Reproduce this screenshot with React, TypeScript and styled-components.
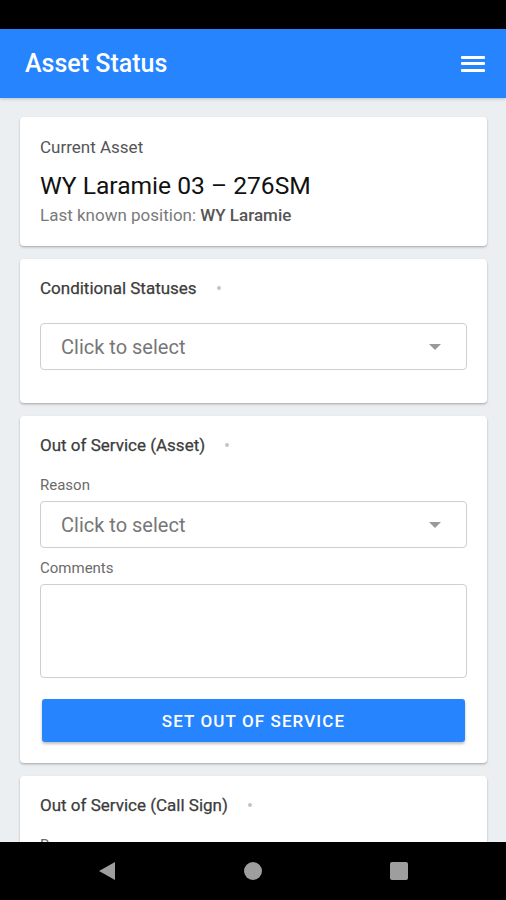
import { FC } from 'react';
import styled, { createGlobalStyle } from 'styled-components';

const GlobalStyle = createGlobalStyle`
  html, body {
    margin: 0;
    padding: 0;
    height: 100%;
  }
  body {
    font-family: Roboto, 'Liberation Sans', sans-serif;
    background: #eceff1;
  }
`;

const Screen = styled.div`
  height: 900px;
  display: flex;
  flex-direction: column;
  overflow: hidden;
  background: #eceff1;
`;

const StatusBar = styled.div`
  height: 29px;
  flex: none;
  background: #000;
`;

const AppBar = styled.header`
  height: 69px;
  flex: none;
  background: #2684ff;
  display: flex;
  align-items: center;
  justify-content: space-between;
  padding: 0 21px 0 25px;
  box-shadow: 0 1px 3px rgba(0, 0, 0, 0.2);
`;

const AppTitle = styled.h1`
  margin: 0;
  color: #fff;
  font-size: 25px;
  font-weight: 500;
`;

const MenuButton = styled.div`
  width: 24px;
  display: flex;
  flex-direction: column;
  gap: 3.5px;

  span {
    height: 3px;
    background: #fff;
    border-radius: 1px;
  }
`;

const Content = styled.main`
  flex: 1;
  overflow: hidden;
  padding: 19px 19px 0 20px;
  display: flex;
  flex-direction: column;
  gap: 13px;
`;

const Card = styled.section<{ $pb?: number }>`
  flex: none;
  background: #fff;
  border-radius: 4px;
  box-shadow: 0 1px 2px rgba(0, 0, 0, 0.22), 0 2px 3px rgba(0, 0, 0, 0.08);
  padding: 20px 20px ${(p) => p.$pb ?? 20}px 20px;
  display: flex;
  flex-direction: column;
`;

const Overline = styled.div`
  font-size: 17px;
  line-height: 20px;
  color: #555;
`;

const AssetName = styled.div`
  margin-top: 15px;
  font-size: 24.6px;
  line-height: 28px;
  color: #111;
`;

const Position = styled.div`
  margin-top: 5px;
  font-size: 17px;
  line-height: 20px;
  color: #7a7a7a;

  b {
    color: #555;
    font-weight: 500;
  }
`;

const SectionHead = styled.div<{ $mb: number }>`
  display: flex;
  align-items: center;
  gap: 20px;
  font-size: 17px;
  line-height: 18px;
  font-weight: 400;
  color: #3c3c3c;
  -webkit-text-stroke: 0.25px #3c3c3c;
  margin-bottom: ${(p) => p.$mb}px;
`;

const Dot = styled.span`
  width: 4px;
  height: 4px;
  border-radius: 50%;
  background: #c4c4c4;
`;

const FieldLabel = styled.div<{ $mb: number }>`
  font-size: 15px;
  line-height: 18px;
  color: #6b6b6b;
  margin-bottom: ${(p) => p.$mb}px;
`;

const Select = styled.div<{ $mb: number }>`
  height: 47px;
  box-sizing: border-box;
  border: 1px solid #cfcfcf;
  border-radius: 4px;
  display: flex;
  align-items: center;
  justify-content: space-between;
  padding: 0 25px 0 20px;
  font-size: 20px;
  color: #777;
  margin-bottom: ${(p) => p.$mb}px;
`;

const Caret = styled.span`
  width: 0;
  height: 0;
  border-left: 6px solid transparent;
  border-right: 6px solid transparent;
  border-top: 6px solid #9a9a9a;
`;

const TextArea = styled.div`
  height: 94px;
  box-sizing: border-box;
  border: 1px solid #cfcfcf;
  border-radius: 4px;
  margin-bottom: 21px;
`;

const PrimaryButton = styled.button`
  margin: 0 2px;
  height: 43px;
  border: none;
  border-radius: 3px;
  background: #2684ff;
  color: #fff;
  font-family: Roboto, 'Liberation Sans', sans-serif;
  font-size: 17px;
  font-weight: 500;
  letter-spacing: 1.1px;
  box-shadow: 0 2px 3px rgba(0, 0, 0, 0.25);
`;

const NavBar = styled.nav`
  position: fixed;
  left: 0;
  right: 0;
  bottom: 0;
  height: 58px;
  background: #000;
  display: flex;
  align-items: center;
  justify-content: center;
  gap: 126px;
`;

const Back = () => (
  <svg width="20" height="22" viewBox="0 0 20 22">
    <path d="M18 2 L18 20 L2 11 Z" fill="#9e9e9e" />
  </svg>
);

const Home = () => (
  <svg width="20" height="20" viewBox="0 0 20 20">
    <circle cx="10" cy="10" r="9" fill="#9e9e9e" />
  </svg>
);

const Recents = () => (
  <svg width="20" height="20" viewBox="0 0 20 20">
    <rect x="1" y="1" width="18" height="18" rx="2" fill="#9e9e9e" />
  </svg>
);

const SelectField: FC<{ mb: number }> = ({ mb }) => (
  <Select $mb={mb}>
    Click to select
    <Caret />
  </Select>
);

export default function App() {
  return (
    <>
      <GlobalStyle />
      <Screen>
        <StatusBar />
        <AppBar>
          <AppTitle>Asset Status</AppTitle>
          <MenuButton>
            <span />
            <span />
            <span />
          </MenuButton>
        </AppBar>
        <Content>
          <Card $pb={21}>
            <Overline>Current Asset</Overline>
            <AssetName>WY Laramie 03 – 276SM</AssetName>
            <Position>
              Last known position: <b>WY Laramie</b>
            </Position>
          </Card>
          <Card>
            <SectionHead $mb={26}>
              Conditional Statuses <Dot />
            </SectionHead>
            <SelectField mb={13} />
          </Card>
          <Card $pb={21}>
            <SectionHead $mb={22}>
              Out of Service (Asset) <Dot />
            </SectionHead>
            <FieldLabel $mb={7}>Reason</FieldLabel>
            <SelectField mb={11} />
            <FieldLabel $mb={7}>Comments</FieldLabel>
            <TextArea />
            <PrimaryButton>SET OUT OF SERVICE</PrimaryButton>
          </Card>
          <Card>
            <SectionHead $mb={22}>
              Out of Service (Call Sign) <Dot />
            </SectionHead>
            <FieldLabel $mb={7}>Reason</FieldLabel>
            <SelectField mb={11} />
          </Card>
        </Content>
        <NavBar>
          <Back />
          <Home />
          <Recents />
        </NavBar>
      </Screen>
    </>
  );
}
